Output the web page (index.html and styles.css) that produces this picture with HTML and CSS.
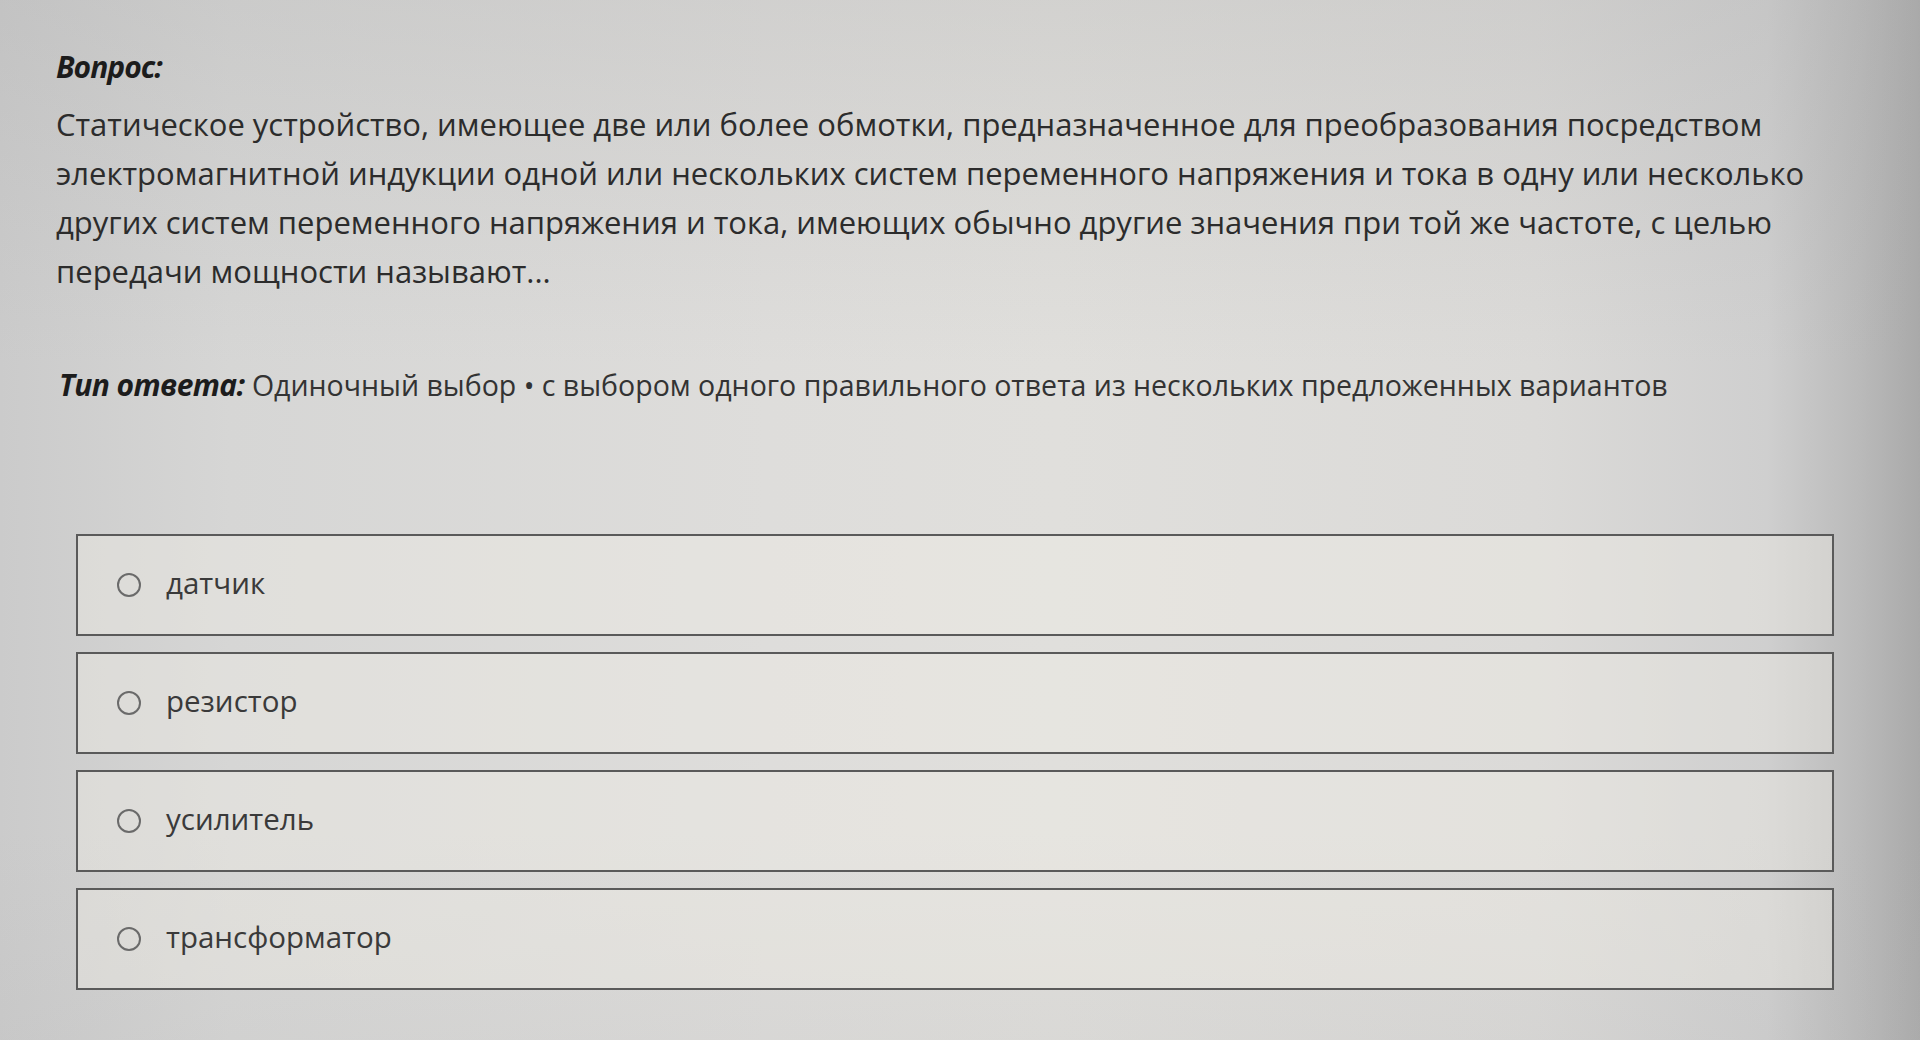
FILE: index.html
```html
<!DOCTYPE html>
<html lang="ru">
<head>
<meta charset="utf-8">
<title>Вопрос</title>
<link rel="stylesheet" href="styles.css">
</head>
<body>
<main class="page">
  <div class="label">Вопрос:</div>
  <p class="question">Статическое устройство, имеющее две или более обмотки, предназначенное для преобразования посредством<br>электромагнитной индукции одной или нескольких систем переменного напряжения и тока в одну или несколько<br>других систем переменного напряжения и тока, имеющих обычно другие значения при той же частоте, с целью<br>передачи мощности называют...</p>
  <p class="answer-type"><span class="label-inline">Тип ответа:</span> Одиночный выбор • с выбором одного правильного ответа из нескольких предложенных вариантов</p>
  <div class="options">
    <label class="option"><span class="radio"></span><span class="option-text">датчик</span></label>
    <label class="option"><span class="radio"></span><span class="option-text">резистор</span></label>
    <label class="option"><span class="radio"></span><span class="option-text">усилитель</span></label>
    <label class="option"><span class="radio"></span><span class="option-text">трансформатор</span></label>
  </div>
</main>
</body>
</html>
```

FILE: styles.css
```css
html, body {
  margin: 0;
  padding: 0;
  height: 100%;
}
body {
  font-family: "Open Sans", "Noto Sans", sans-serif;
  color: #2e2e2e;
  background:
    linear-gradient(180deg, rgba(170,170,170,0.25) 0%, rgba(255,255,255,0) 35%, rgba(255,255,255,0) 80%, rgba(180,180,180,0.15) 100%),
    linear-gradient(90deg, #cbcbcb 0%, #d6d6d5 12%, #dedddb 40%, #e0dfdc 55%, #dbdad8 80%, #cfcfcf 92%, #b9b9b9 97%, #a9a9a9 100%);
  overflow: hidden;
}
.page {
  padding: 43px 0 0 56px;
}
.label {
  font-weight: 700;
  font-style: italic;
  font-size: 30px;
  line-height: 48px;
  color: #1c1c1c;
  letter-spacing: -1px;
}
.question {
  margin: 9px 0 0 0;
  font-size: 31px;
  line-height: 49px;
  color: #2c2c2c;
  white-space: nowrap;
}
.answer-type {
  margin: 64px 0 0 3px;
  font-size: 28.5px;
  line-height: 49px;
  color: #333;
  white-space: nowrap;
}
.label-inline {
  font-weight: 700;
  font-style: italic;
  font-size: 30px;
  color: #1c1c1c;
  letter-spacing: -0.6px;
}
.options {
  margin: 124px 0 0 20px;
  width: 1758px;
  display: flex;
  flex-direction: column;
  gap: 16px;
}
.option {
  box-sizing: border-box;
  height: 102px;
  border: 2px solid #5a5a5a;
  background: rgba(240, 238, 230, 0.4);
  display: flex;
  align-items: center;
  padding-left: 39px;
}
.radio {
  box-sizing: border-box;
  width: 24px;
  height: 24px;
  border: 2px solid #6a6a6a;
  border-radius: 50%;
  flex: none;
}
.option-text {
  margin-left: 25px;
  font-size: 29.5px;
  color: #3a3a3a;
  line-height: 1;
  padding-bottom: 4px;
}
```
